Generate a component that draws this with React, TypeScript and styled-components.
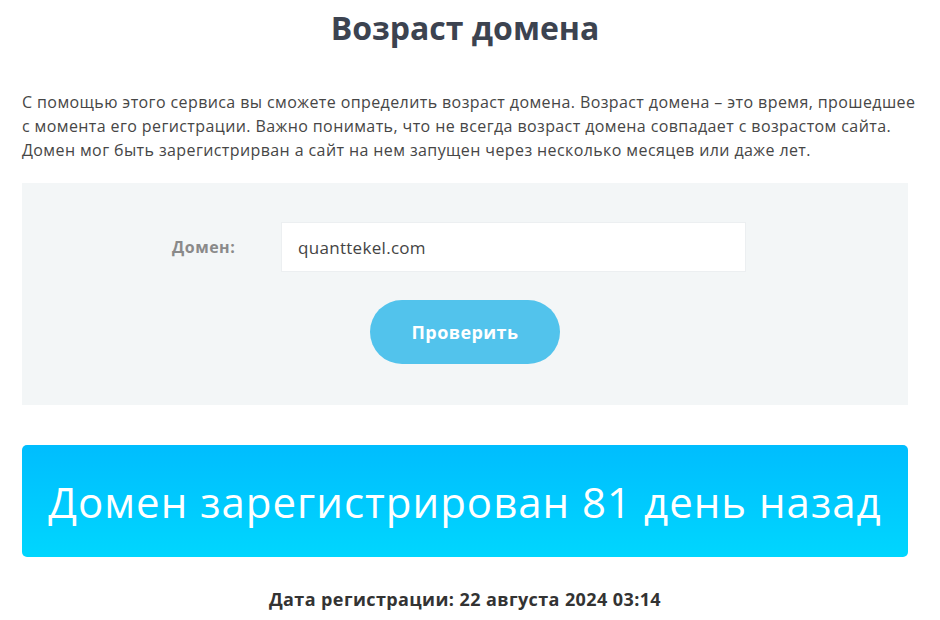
import styled, { createGlobalStyle } from 'styled-components';

const GlobalStyle = createGlobalStyle`
    html, body {
        margin: 0;
        padding: 0;
        background: #ffffff;
    }
    body {
        font-family: 'Open Sans', 'Liberation Sans', sans-serif;
        color: #333333;
    }
`;

const Page = styled.div`
    width: 886px;
    margin-left: 22px;
    display: flex;
    flex-direction: column;
`;

const Title = styled.h1`
    margin: 10px 0 0;
    font-size: 32px;
    line-height: 36px;
    font-weight: 700;
    color: #3c4350;
    text-align: center;
`;

const Intro = styled.p`
    margin: 44px 0 0;
    font-size: 16px;
    line-height: 24px;
    color: #464646;
    letter-spacing: 0.4px;
`;

const IntroLine = styled.span`
    display: block;
    white-space: nowrap;
`;

const FormPanel = styled.div`
    margin-top: 21px;
    background: #f3f6f7;
    padding: 39px 0 41px;
    display: flex;
    flex-direction: column;
    align-items: center;
    gap: 28px;
`;

const FieldRow = styled.div`
    display: flex;
    align-items: center;
    margin-right: 12px;
`;

const FieldLabel = styled.label`
    width: 109px;
    font-size: 16px;
    font-weight: 700;
    letter-spacing: 0.5px;
    color: #8a8a8a;
`;

const DomainInput = styled.input`
    width: 465px;
    height: 50px;
    box-sizing: border-box;
    border: 1px solid #eceff1;
    background: #ffffff;
    padding: 0 16px;
    font-family: 'Open Sans', 'Liberation Sans', sans-serif;
    font-size: 17px;
    letter-spacing: 0.3px;
    color: #444444;
    outline: none;
`;

const CheckBtn = styled.button`
    width: 190px;
    height: 64px;
    border: none;
    border-radius: 32px;
    background: #52c3ec;
    color: #ffffff;
    font-family: 'Open Sans', 'Liberation Sans', sans-serif;
    font-size: 18px;
    font-weight: 700;
    letter-spacing: 0.4px;
    cursor: pointer;
`;

const ResultBanner = styled.div`
    margin-top: 40px;
    height: 112px;
    border-radius: 5px;
    background: linear-gradient(180deg, #00bdfe 0%, #00d6fe 100%);
    display: flex;
    align-items: center;
    justify-content: center;
    color: #ffffff;
    font-size: 42px;
    font-weight: 400;
    letter-spacing: 1px;
`;

const RegDate = styled.div`
    margin-top: 30px;
    text-align: center;
    font-size: 18px;
    font-weight: 700;
    letter-spacing: 0.4px;
    color: #333333;
`;

const App = (): JSX.Element => {
    return (
        <>
            <GlobalStyle />
            <Page>
                <Title>Возраст домена</Title>
                <Intro>
                    <IntroLine>
                        С помощью этого сервиса вы сможете определить возраст домена. Возраст домена – это время, прошедшее
                    </IntroLine>
                    <IntroLine>
                        с момента его регистрации. Важно понимать, что не всегда возраст домена совпадает с возрастом сайта.
                    </IntroLine>
                    <IntroLine>
                        Домен мог быть зарегистрирван а сайт на нем запущен через несколько месяцев или даже лет.
                    </IntroLine>
                </Intro>
                <FormPanel>
                    <FieldRow>
                        <FieldLabel htmlFor="domain">Домен:</FieldLabel>
                        <DomainInput id="domain" defaultValue="quanttekel.com" />
                    </FieldRow>
                    <CheckBtn>Проверить</CheckBtn>
                </FormPanel>
                <ResultBanner>Домен зарегистрирован 81 день назад</ResultBanner>
                <RegDate>Дата регистрации: 22 августа 2024 03:14</RegDate>
            </Page>
        </>
    );
};

export default App;
